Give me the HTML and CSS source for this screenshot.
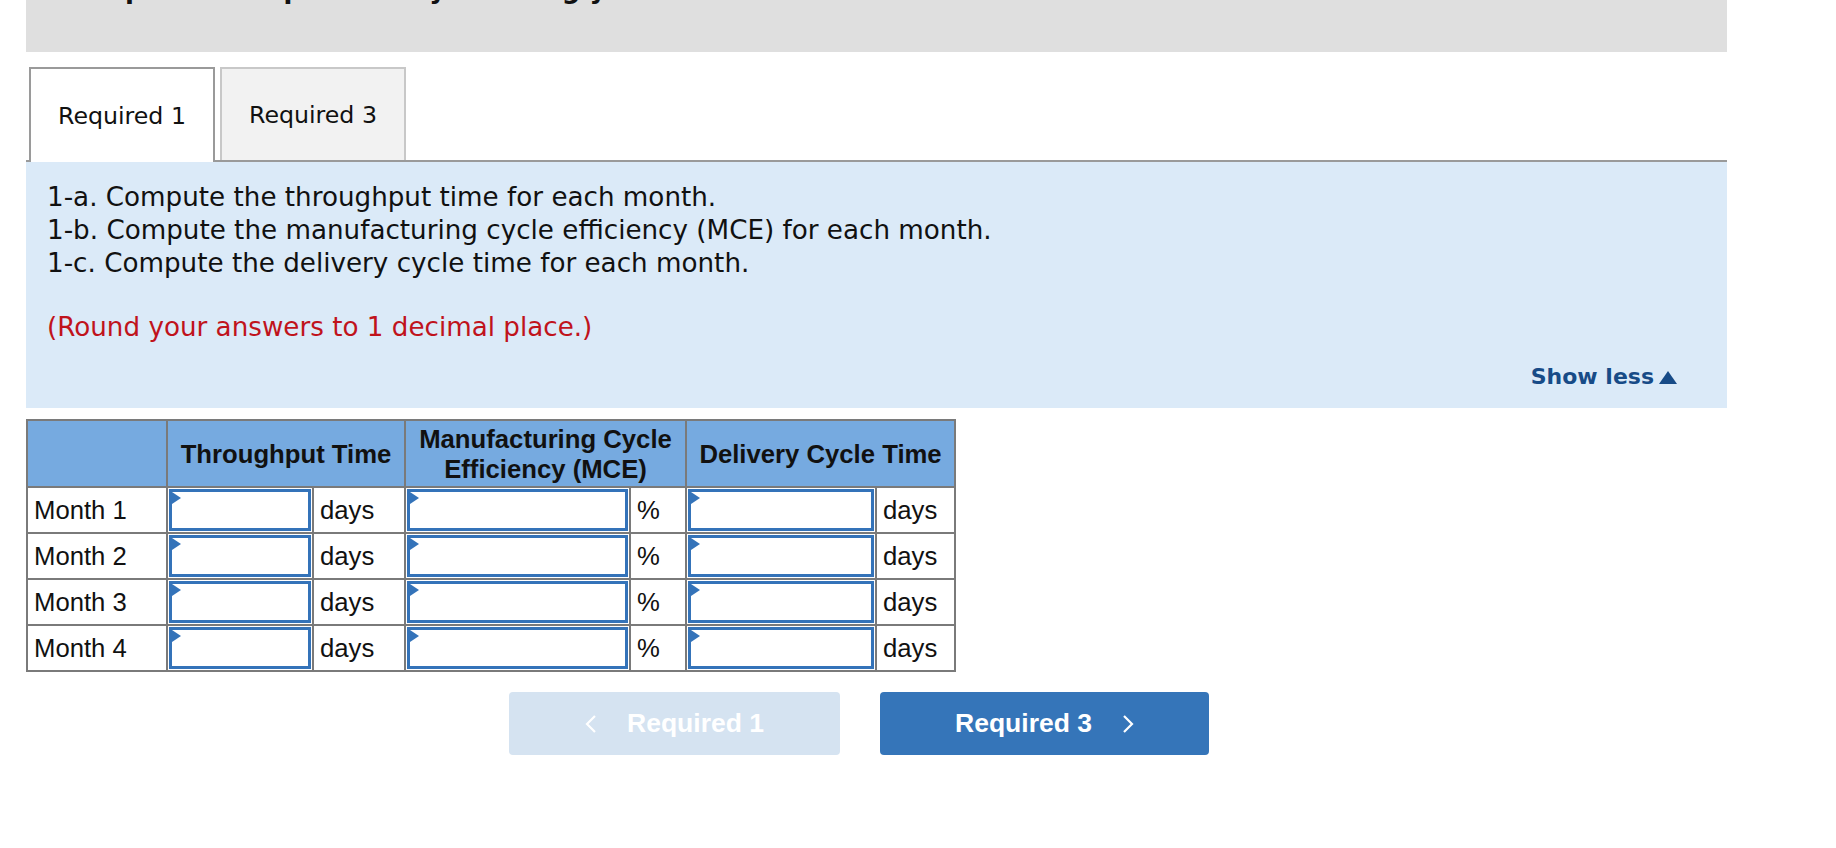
FILE: index.html
```html
<!DOCTYPE html>
<html lang="en">
<head>
    <meta charset="UTF-8">
    <meta name="viewport" content="width=device-width, initial-scale=1.0">
    <title>Required 1</title>
    <link rel="stylesheet" href="styles.css">
</head>
<body>
<div class="page">

    <!-- Question instructions (scrolled mostly out of view) -->
    <div class="intro">
        <h2>Complete this question by entering your answers in the tabs below.</h2>
    </div>

    <!-- Tabs -->
    <div class="tabs">
        <div class="tab active">Required 1</div>
        <div class="tab">Required 3</div>
    </div>

    <!-- Instructions for this tab -->
    <div class="panel">
        <p class="steps">
            1-a. Compute the throughput time for each month.<br>
            1-b. Compute the manufacturing cycle efficiency (MCE) for each month.<br>
            1-c. Compute the delivery cycle time for each month.
        </p>
        <p class="note">(Round your answers to 1 decimal place.)</p>
        <div class="toggle"><a href="#">Show less</a><span class="arrow-up"></span></div>
    </div>

    <!-- Answer grid -->
    <table class="answers">
        <colgroup>
            <col class="c-label">
            <col class="c-tp">
            <col class="c-tp-unit">
            <col class="c-mce">
            <col class="c-mce-unit">
            <col class="c-dct">
            <col class="c-dct-unit">
        </colgroup>
        <tr>
            <th></th>
            <th colspan="2">Throughput Time</th>
            <th colspan="2">Manufacturing Cycle<br>Efficiency (MCE)</th>
            <th colspan="2">Delivery Cycle Time</th>
        </tr>
        <tr>
            <td class="label">Month 1</td>
            <td class="inp"><div class="field"><span class="flag"></span><input type="text"></div></td>
            <td class="unit">days</td>
            <td class="inp"><div class="field"><span class="flag"></span><input type="text"></div></td>
            <td class="unit">%</td>
            <td class="inp"><div class="field"><span class="flag"></span><input type="text"></div></td>
            <td class="unit">days</td>
        </tr>
        <tr>
            <td class="label">Month 2</td>
            <td class="inp"><div class="field"><span class="flag"></span><input type="text"></div></td>
            <td class="unit">days</td>
            <td class="inp"><div class="field"><span class="flag"></span><input type="text"></div></td>
            <td class="unit">%</td>
            <td class="inp"><div class="field"><span class="flag"></span><input type="text"></div></td>
            <td class="unit">days</td>
        </tr>
        <tr>
            <td class="label">Month 3</td>
            <td class="inp"><div class="field"><span class="flag"></span><input type="text"></div></td>
            <td class="unit">days</td>
            <td class="inp"><div class="field"><span class="flag"></span><input type="text"></div></td>
            <td class="unit">%</td>
            <td class="inp"><div class="field"><span class="flag"></span><input type="text"></div></td>
            <td class="unit">days</td>
        </tr>
        <tr>
            <td class="label">Month 4</td>
            <td class="inp"><div class="field"><span class="flag"></span><input type="text"></div></td>
            <td class="unit">days</td>
            <td class="inp"><div class="field"><span class="flag"></span><input type="text"></div></td>
            <td class="unit">%</td>
            <td class="inp"><div class="field"><span class="flag"></span><input type="text"></div></td>
            <td class="unit">days</td>
        </tr>
    </table>

    <!-- Prev / next tab buttons -->
    <div class="nav">
        <button class="btn prev">
            <svg width="12" height="20" viewBox="0 0 12 20"><polyline points="10,2 2,10 10,18" fill="none" stroke="#fff" stroke-width="2.2"/></svg>
            <span>Required 1</span>
        </button>
        <button class="btn next">
            <span>Required 3</span>
            <svg width="12" height="20" viewBox="0 0 12 20"><polyline points="2,2 10,10 2,18" fill="none" stroke="#fff" stroke-width="2.2"/></svg>
        </button>
    </div>

</div>
</body>
</html>
```

FILE: styles.css
```css
body {
    margin: 0;
    font-family: "DejaVu Sans", Verdana, sans-serif;
    color: #111;
    background: #fff;
}

.page {
    padding-left: 26px;
    width: 1701px;
}

/* Gray instruction bar */
.intro {
    background-color: #dfdfdf;
    height: 52px;
    overflow: hidden;
}

.intro h2 {
    margin: -26px 0 0 35px;
    font-size: 26px;
    line-height: 30px;
    font-weight: bold;
    color: #111;
    white-space: nowrap;
}

/* Tabs */
.tabs {
    display: flex;
    gap: 5px;
    margin-top: 15px;
    padding-left: 3px;
    border-bottom: 2px solid #9a9a9a;
}

.tab {
    box-sizing: border-box;
    width: 186px;
    height: 93px;
    display: flex;
    align-items: center;
    justify-content: center;
    font-size: 23.7px;
    background-color: #f2f2f2;
    border: 2px solid #c8c8c8;
    border-bottom: none;
}

.tab.active {
    height: 95px;
    margin-bottom: -2px;
    background-color: #fff;
    border-color: #9a9a9a;
}

/* Light blue instructions panel */
.panel {
    background-color: #dbeaf8;
    padding: 19px 50px 16px 21px;
}

.panel p {
    margin: 0;
    font-size: 26.2px;
    line-height: 33px;
}

.panel .note {
    margin-top: 31px;
    color: #c0131c;
}

.toggle {
    margin-top: 18px;
    display: flex;
    justify-content: flex-end;
    align-items: center;
    line-height: 30px;
}

.toggle a {
    color: #174b87;
    font-weight: bold;
    font-size: 22px;
    text-decoration: none;
}

.arrow-up {
    width: 0;
    height: 0;
    margin-left: 5px;
    border-left: 9.5px solid transparent;
    border-right: 9.5px solid transparent;
    border-bottom: 13px solid #174b87;
}

/* Answer table */
.answers {
    margin-top: 11px;
    border-collapse: collapse;
    table-layout: fixed;
    width: 928px;
    font-family: "Liberation Sans", Arial, sans-serif;
    font-size: 25.7px;
    color: #111;
}

.c-label { width: 140px; }
.c-tp { width: 146px; }
.c-tp-unit { width: 92px; }
.c-mce { width: 225px; }
.c-mce-unit { width: 56px; }
.c-dct { width: 190px; }
.c-dct-unit { width: 79px; }

.answers th,
.answers td {
    border: 2px solid #7a7a7a;
    padding: 0;
}

.answers th {
    height: 65px;
    background-color: #76aae0;
    font-weight: bold;
    line-height: 30px;
    text-align: center;
}

.answers td.label {
    padding-left: 6px;
}

.answers td.unit {
    padding-left: 6px;
}

.answers td.inp {
    padding: 1px;
}

.field {
    position: relative;
}

.field input {
    display: block;
    box-sizing: border-box;
    width: 100%;
    height: 42px;
    margin: 0;
    border: 3px solid #3473b9;
    background: #fff;
    font-size: 22px;
}

.flag {
    position: absolute;
    left: 3px;
    top: 3px;
    width: 0;
    height: 0;
    border-top: 6px solid transparent;
    border-bottom: 6px solid transparent;
    border-left: 9px solid #3473b9;
}

/* Navigation buttons */
.nav {
    display: flex;
    gap: 40px;
    margin-top: 20px;
    padding-left: 483px;
}

.btn {
    width: 331px;
    height: 63px;
    display: flex;
    align-items: center;
    justify-content: center;
    gap: 30px;
    border: none;
    border-radius: 4px;
    color: #fff;
    font-family: "Liberation Sans", Arial, sans-serif;
    font-weight: bold;
    font-size: 26.5px;
    cursor: pointer;
}

.btn.prev {
    background-color: #d5e3f1;
}

.btn.next {
    width: 329px;
    background-color: #3575b9;
}
```
